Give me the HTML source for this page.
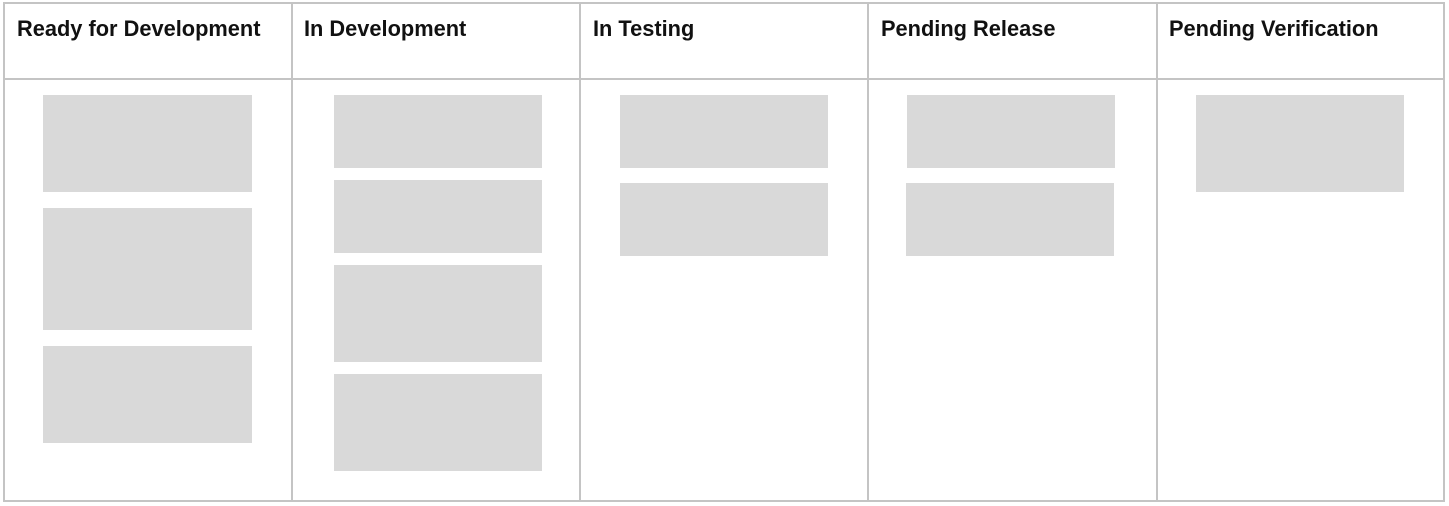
<!DOCTYPE html>
<html><head><style>
body{margin:0;width:1449px;height:506px;background:#fff;position:relative;overflow:hidden;font-family:"Liberation Sans",sans-serif}
.l{position:absolute;background:#c4c4c4}
.c{position:absolute;background:#d9d9d9}
.t{position:absolute;top:16px;font-weight:bold;font-size:21.8px;color:#111}
</style></head><body>
<div class="l" style="left:3px;top:2px;width:1442px;height:2px"></div>
<div class="l" style="left:3px;top:500px;width:1442px;height:2px"></div>
<div class="l" style="left:3px;top:78px;width:1442px;height:2px"></div>
<div class="l" style="left:3px;top:2px;width:2px;height:500px"></div>
<div class="l" style="left:1443px;top:2px;width:2px;height:500px"></div>
<div class="l" style="left:291px;top:2px;width:2px;height:500px"></div>
<div class="l" style="left:579px;top:2px;width:2px;height:500px"></div>
<div class="l" style="left:867px;top:2px;width:2px;height:500px"></div>
<div class="l" style="left:1156px;top:2px;width:2px;height:500px"></div>
<div class="t" style="left:17px">Ready for Development</div>
<div class="t" style="left:304px">In Development</div>
<div class="t" style="left:593px">In Testing</div>
<div class="t" style="left:881px">Pending Release</div>
<div class="t" style="left:1169px">Pending Verification</div>
<div class="c" style="left:43px;top:95px;width:209px;height:97px"></div>
<div class="c" style="left:43px;top:208px;width:209px;height:122px"></div>
<div class="c" style="left:43px;top:346px;width:209px;height:97px"></div>
<div class="c" style="left:334px;top:95px;width:208px;height:73px"></div>
<div class="c" style="left:334px;top:180px;width:208px;height:73px"></div>
<div class="c" style="left:334px;top:265px;width:208px;height:97px"></div>
<div class="c" style="left:334px;top:374px;width:208px;height:97px"></div>
<div class="c" style="left:620px;top:95px;width:208px;height:73px"></div>
<div class="c" style="left:620px;top:183px;width:208px;height:73px"></div>
<div class="c" style="left:907px;top:95px;width:208px;height:73px"></div>
<div class="c" style="left:906px;top:183px;width:208px;height:73px"></div>
<div class="c" style="left:1196px;top:95px;width:208px;height:97px"></div>
</body></html>
